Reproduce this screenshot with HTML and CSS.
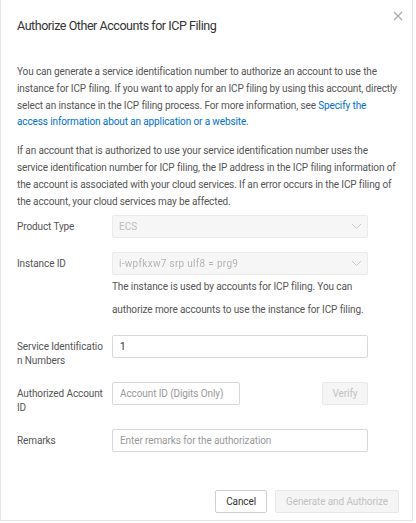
FILE: index.html
```html
<!DOCTYPE html>
<html lang="en">
<head>
<meta charset="utf-8">
<title>Authorize Other Accounts for ICP Filing</title>
<link rel="stylesheet" href="styles.css">
</head>
<body>
<div class="dialog">
  <header class="dlg-head">
    <h2 class="dlg-title">Authorize Other Accounts for ICP Filing</h2>
    <button class="close" type="button" aria-label="Close">
      <svg width="10" height="10" viewBox="0 0 10 10"><path d="M1 1L9 9M9 1L1 9" stroke="#a8a8a8" stroke-width="1.1" fill="none"/></svg>
    </button>
  </header>
  <div class="dlg-body">
    <p class="para">You can generate a service identification number to authorize an account to use the instance for ICP filing. If you want to apply for an ICP filing by using this account, directly select an instance in the ICP filing process. For more information, see <a href="#" class="link">Specify the access information about an application or a website</a>.</p>
    <p class="para last">If an account that is authorized to use your service identification number uses the service identification number for ICP filing, the IP address in the ICP filing information of the account is associated with your cloud services. If an error occurs in the ICP filing of the account, your cloud services may be affected.</p>
    <div class="form">
      <div class="row">
        <div class="label one">Product Type</div>
        <div class="control">
          <div class="select"><span class="sel-text">ECS</span>
            <svg class="chev" width="11" height="7" viewBox="0 0 11 7"><path d="M1 1L5.5 5.5L10 1" stroke="#c8c8c8" stroke-width="1" fill="none"/></svg>
          </div>
        </div>
      </div>
      <div class="row">
        <div class="label one">Instance ID</div>
        <div class="control">
          <div class="select"><span class="sel-text masked">i-wpfkxw7 srp ulf8  = prg9</span>
            <svg class="chev" width="11" height="7" viewBox="0 0 11 7"><path d="M1 1L5.5 5.5L10 1" stroke="#c8c8c8" stroke-width="1" fill="none"/></svg>
          </div>
          <div class="help">The instance is used by accounts for ICP filing. You can authorize more accounts to use the instance for ICP filing.</div>
        </div>
      </div>
      <div class="row">
        <div class="label">Service Identification Numbers</div>
        <div class="control">
          <div class="input"><span class="val">1</span></div>
        </div>
      </div>
      <div class="row">
        <div class="label">Authorized Account ID</div>
        <div class="control inline">
          <div class="input short"><span class="ph">Account ID (Digits Only)</span></div>
          <button class="btn disabled small" type="button">Verify</button>
        </div>
      </div>
      <div class="row">
        <div class="label one">Remarks</div>
        <div class="control">
          <div class="input"><span class="ph">Enter remarks for the authorization</span></div>
        </div>
      </div>
    </div>
  </div>
  <footer class="dlg-foot">
    <button class="btn" type="button">Cancel</button>
    <button class="btn disabled" type="button">Generate and Authorize</button>
  </footer>
</div>
</body>
</html>
```
FILE: styles.css
```css
* { box-sizing: border-box; }
html, body { margin: 0; padding: 0; background: #fff; }
body { font-family: Roboto, "Liberation Sans", Arial, sans-serif; color: #555; }

.dialog {
  width: 413px;
  height: 521px;
  border: 1px solid #e6e6e6;
  border-top: none;
  display: flex;
  flex-direction: column;
  background: #fff;
}

.dlg-head {
  display: flex;
  justify-content: space-between;
  align-items: flex-start;
  padding: 0 8px 0 16px;
}
.dlg-title {
  margin: 16px 0 0;
  font-size: 12.5px;
  letter-spacing: -0.45px;
  line-height: 20px;
  font-weight: 400;
  color: #333;
}
.close {
  margin-top: 10px;
  border: none;
  background: none;
  padding: 0;
  width: 12px;
  height: 12px;
  display: flex;
  align-items: center;
  justify-content: center;
}

.dlg-body { padding: 28px 13px 0 16px; }
.para {
  margin: 0 0 12px;
  font-size: 10px;
  letter-spacing: -0.12px;
  line-height: 16.8px;
  color: #555;
}
.para.last { margin-bottom: 5px; }
.link { color: #0070cc; text-decoration: none; }

.row { display: flex; margin-bottom: 14px; }
.label {
  width: 95px;
  flex: none;
  padding: 5px 8px 0 0;
  font-size: 10px;
  letter-spacing: -0.1px;
  line-height: 14px;
  color: #555;
  word-break: break-all;
}
.label.one { padding-top: 0; line-height: 23px; }
.control { width: 256px; flex: none; }
.control.inline { display: flex; justify-content: space-between; align-items: flex-start; }

.select {
  height: 23px;
  border: 1px solid #ebebeb;
  background: #f6f6f7;
  border-radius: 2px;
  display: flex;
  align-items: center;
  justify-content: space-between;
  padding: 0 5px 0 6px;
  font-size: 10px;
  color: #bdbdbd;
}
.sel-text.masked { filter: blur(0.7px); color: #b5b5b5; letter-spacing: 0.3px; }
.help {
  font-size: 10px;
  letter-spacing: -0.1px;
  line-height: 23px;
  color: #555;
}

.input {
  height: 23px;
  border: 1px solid #d8d8dc;
  border-radius: 2px;
  background: #fff;
  display: flex;
  align-items: center;
  padding: 0 7px;
  font-size: 10px;
  letter-spacing: -0.1px;
}
.input.short { width: 128px; }
.val { color: #333; }
.ph { color: #999; }

.btn {
  height: 23px;
  padding: 0 10px;
  border: 1px solid #cfcfd3;
  border-radius: 2px;
  background: #fff;
  font-family: inherit;
  font-size: 10px;
  letter-spacing: -0.1px;
  color: #333;
}
.btn.disabled { background: #f5f5f6; border-color: #e8e8ea; color: #c2c2c2; }
.btn.small { width: 46px; padding: 0; }

.dlg-foot {
  margin-top: auto;
  display: flex;
  justify-content: flex-end;
  gap: 8px;
  padding: 0 13px 7px 0;
}
```
